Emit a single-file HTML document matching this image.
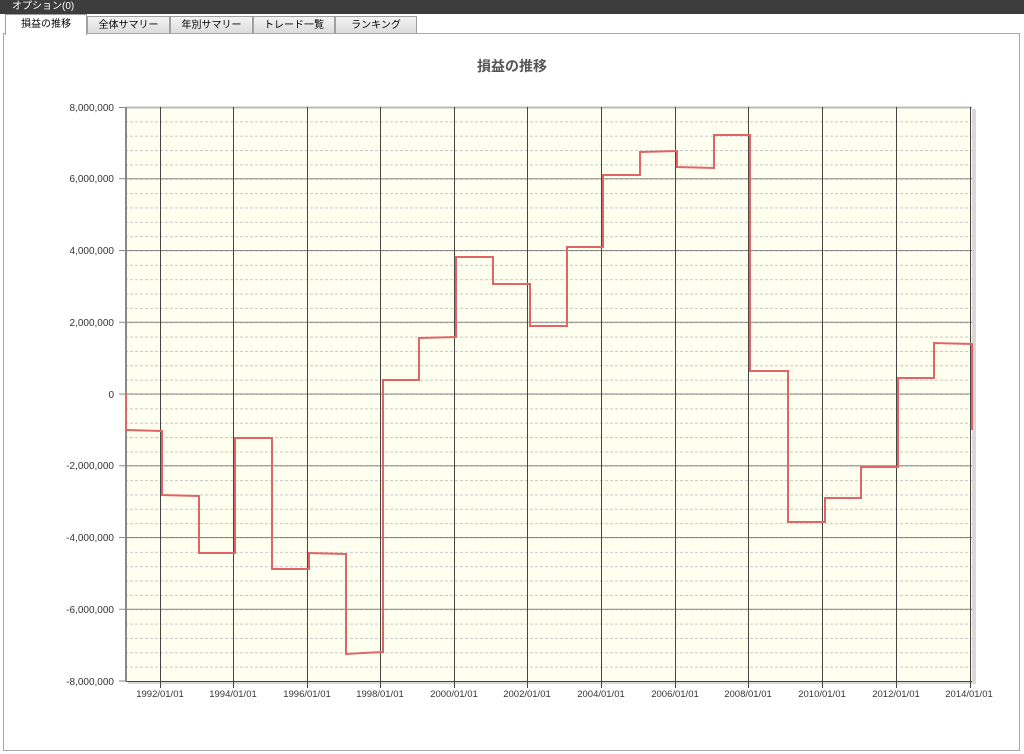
<!DOCTYPE html>
<html><head><meta charset="utf-8"><style>
body{margin:0;width:1024px;height:754px;background:#fff;overflow:hidden;font-family:"Liberation Sans","Noto Sans CJK JP",sans-serif;position:relative}
.top{position:absolute;left:0;top:0;width:1024px;height:14px;background:#3d3d3d;color:#fff;font-size:10px;line-height:14px;padding-left:12px;box-sizing:border-box}
.tab{position:absolute;top:16px;height:17px;border:1px solid #a0a0a0;border-bottom:none;background:linear-gradient(#f4f4f4,#dcdcdc);font-size:10px;line-height:17px;text-align:center;box-sizing:border-box;color:#000}
.tab.sel{background:#fff;top:14px;height:21px;line-height:20px;z-index:2}
.frame{position:absolute;left:3px;top:33px;width:1017px;height:718px;border:1px solid #a8a8a8;box-sizing:border-box}
svg{position:absolute;left:0;top:0}
</style></head><body>
<div class="top">オプション(0)</div>
<div class="frame"></div>
<div class="tab sel" style="left:5px;width:82px">損益の推移</div>
<div class="tab" style="left:87px;width:83px">全体サマリー</div>
<div class="tab" style="left:170px;width:83px">年別サマリー</div>
<div class="tab" style="left:253px;width:82px">トレード一覧</div>
<div class="tab" style="left:335px;width:82px">ランキング</div>
<svg width="1024" height="754" font-family="Liberation Sans, sans-serif">
<defs><pattern id="mg" x="0" y="107" width="20" height="14.35" patternUnits="userSpaceOnUse"><line x1="0" y1="0.5" x2="20" y2="0.5" stroke="#c8c8c8" stroke-width="1" stroke-dasharray="3,2"/></pattern></defs>
<text x="512" y="71" text-anchor="middle" font-size="14" font-weight="bold" fill="#555" font-family="Liberation Sans, Noto Sans CJK JP, sans-serif">損益の推移</text>
<rect x="128" y="109" width="848" height="575" fill="#d8d8d8"/>
<rect x="126" y="107" width="846" height="574" fill="#fffff0"/>
<rect x="126" y="107" width="846" height="574" fill="url(#mg)"/>
<g stroke="#888" stroke-width="1">
<line x1="126" y1="107.5" x2="972" y2="107.5" stroke="#bbb" stroke-width="2"/>
<line x1="119" y1="178.75" x2="972" y2="178.75"/>
<line x1="119" y1="250.5" x2="972" y2="250.5"/>
<line x1="119" y1="322.25" x2="972" y2="322.25"/>
<line x1="119" y1="394" x2="972" y2="394"/>
<line x1="119" y1="465.75" x2="972" y2="465.75"/>
<line x1="119" y1="537.5" x2="972" y2="537.5"/>
<line x1="119" y1="609.25" x2="972" y2="609.25"/>
<line x1="119" y1="107.5" x2="126" y2="107.5"/>
<line x1="119" y1="681" x2="126" y2="681"/>
</g>
<g stroke="#444" stroke-width="1">
<line x1="160.5" y1="107" x2="160.5" y2="688"/>
<line x1="233.5" y1="107" x2="233.5" y2="688"/>
<line x1="307.5" y1="107" x2="307.5" y2="688"/>
<line x1="380.5" y1="107" x2="380.5" y2="688"/>
<line x1="454.5" y1="107" x2="454.5" y2="688"/>
<line x1="527.5" y1="107" x2="527.5" y2="688"/>
<line x1="601.5" y1="107" x2="601.5" y2="688"/>
<line x1="675.5" y1="107" x2="675.5" y2="688"/>
<line x1="748.5" y1="107" x2="748.5" y2="688"/>
<line x1="822.5" y1="107" x2="822.5" y2="688"/>
<line x1="896.5" y1="107" x2="896.5" y2="688"/>
<line x1="970.5" y1="107" x2="970.5" y2="688"/>
<line x1="126" y1="681.5" x2="972" y2="681.5"/>
</g>
<line x1="126" y1="107" x2="126" y2="682" stroke="#888" stroke-width="2"/>
<polyline fill="none" stroke="#e06666" stroke-width="2" points="126,394 126,430 162,431 162,495 199,496 199,553 235,553 235,438 272,438 272,569 309,569 309,553 346,554 346,654 383,652 383,380 419,380 419,338 456,337 456,257 493,257 493,284 530,284 530,326 567,326 567,247 603,247 603,175 640,175 640,152 677,151 677,167 714,168 714,135 750,135 750,371 788,371 788,522 825,522 825,498 861,498 861,467 898,467 898,378 934,378 934,343 972,344 972,430"/>
<g font-size="10" fill="#333" text-anchor="end">
<text x="114" y="111">8,000,000</text>
<text x="114" y="182">6,000,000</text>
<text x="114" y="254">4,000,000</text>
<text x="114" y="326">2,000,000</text>
<text x="114" y="398">0</text>
<text x="114" y="469">-2,000,000</text>
<text x="114" y="541">-4,000,000</text>
<text x="114" y="613">-6,000,000</text>
<text x="114" y="685">-8,000,000</text>
</g>
<g font-size="9.5" fill="#333" text-anchor="middle">
<text x="160" y="697">1992/01/01</text>
<text x="233" y="697">1994/01/01</text>
<text x="307" y="697">1996/01/01</text>
<text x="380" y="697">1998/01/01</text>
<text x="454" y="697">2000/01/01</text>
<text x="527" y="697">2002/01/01</text>
<text x="601" y="697">2004/01/01</text>
<text x="675" y="697">2006/01/01</text>
<text x="748" y="697">2008/01/01</text>
<text x="822" y="697">2010/01/01</text>
<text x="896" y="697">2012/01/01</text>
<text x="969" y="697">2014/01/01</text>
</g>
</svg>
</body></html>
